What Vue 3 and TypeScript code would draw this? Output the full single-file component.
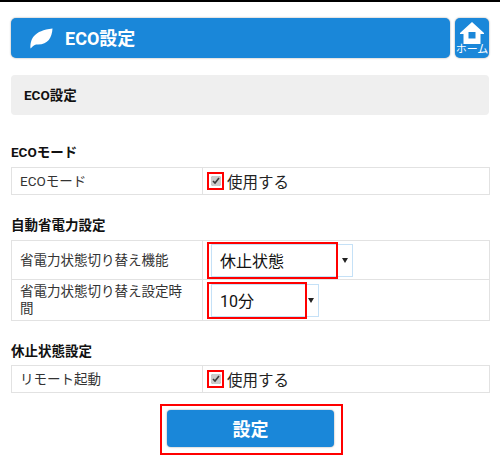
<script setup lang="ts">
interface Opt { label: string; value: string; width: number; mark: number; height: number }
const selects: Opt[] = [
  { label: '省電力状態切り替え機能', value: '休止状態', width: 142, mark: 131, height: 38 },
  { label: '省電力状態切り替え設定時間', value: '10分', width: 108, mark: 100, height: 40 }
]
</script>

<template>
  <div class="page">
    <header class="top">
      <div class="title">
        <svg class="leaf" width="24" height="22" viewBox="0 0 24 22">
          <path d="M1.500 21.500C1 12 5 3.500 23.500 1.500C23 11 18.500 18.500 7 17.500C4.500 18.500 3 20 1.500 21.500Z" fill="#fff" />
        </svg>
        <span class="title-text">ECO設定</span>
      </div>
      <div class="home">
        <svg width="24" height="22" viewBox="0 0 24 22">
          <path d="M12 0L24 11V12H20.500V22H3.500V12H0V11Z" fill="#fff" />
          <rect x="8.500" y="10" width="7" height="6.500" fill="#1a87d9" />
        </svg>
        <span>ホーム</span>
      </div>
    </header>

    <div class="sub">ECO設定</div>

    <h2 class="first">ECOモード</h2>
    <div class="table">
      <div class="row one">
        <div class="name">ECOモード</div>
        <div class="val">
          <span class="mark"><input type="checkbox" checked /></span><span class="use">使用する</span>
        </div>
      </div>
    </div>

    <h2 class="second">自動省電力設定</h2>
    <div class="table">
      <div
        v-for="s in selects"
        :key="s.label"
        class="row"
        :style="{ height: s.height + 'px' }"
      >
        <div class="name">{{ s.label }}</div>
        <div class="val">
          <div class="select" :style="{ width: s.width + 'px' }">
            <span class="redbox" :style="{ width: s.mark + 'px' }"></span>
            <span class="value">{{ s.value }}</span>
            <span class="arrow"></span>
          </div>
        </div>
      </div>
    </div>

    <h2 class="third">休止状態設定</h2>
    <div class="table">
      <div class="row one">
        <div class="name">リモート起動</div>
        <div class="val">
          <span class="mark"><input type="checkbox" checked /></span><span class="use">使用する</span>
        </div>
      </div>
    </div>

    <div class="actions">
      <button class="submit" type="button">設定</button>
    </div>
  </div>
</template>

<style>
html, body { margin: 0; background: #fff; }
</style>

<style scoped>
.page {
  width: 500px;
  height: 470px;
  box-sizing: border-box;
  border-top: 2px solid #000;
  padding: 16px 11px 0 11px;
  overflow: hidden;
  font-family: Roboto, "Noto Sans CJK JP", sans-serif;
  color: #222;
}
.top { display: flex; gap: 5px; height: 40px; }
.title {
  flex: 1;
  display: flex;
  align-items: center;
  background: #1a87d9;
  border-radius: 5px;
  box-shadow: 0 0 2px rgba(0, 0, 0, .4);
  color: #fff;
  font-size: 18px;
  font-weight: 700;
  padding-left: 18px;
}
.title-text { padding-bottom: 3px; }
.leaf { margin-right: 12px; }
.home {
  width: 34px;
  background: #1a87d9;
  border-radius: 5px;
  box-shadow: 0 0 2px rgba(0, 0, 0, .4);
  color: #fff;
  font-size: 11px;
  line-height: 12px;
  text-align: center;
  display: flex;
  flex-direction: column;
  align-items: center;
  padding-top: 4px;
  box-sizing: border-box;
  white-space: nowrap;
}
.home svg { flex: none; }
.sub {
  margin-top: 17px;
  height: 40px;
  line-height: 41px;
  background: #efefef;
  border-radius: 4px;
  padding-left: 13px;
  font-size: 13.500px;
  font-weight: 700;
  color: #111;
}
h2 {
  margin: 0;
  font-size: 13.500px;
  line-height: 18px;
  font-weight: 700;
  color: #111;
}
.first { margin-top: 28px; margin-bottom: 6px; }
.second { margin-top: 21px; margin-bottom: 6px; }
.third { margin-top: 21px; margin-bottom: 5px; }
.table { border: 1px solid #e2e2e2; margin-right: -1px; }
.row { display: grid; grid-template-columns: 190px 1fr; }
.row + .row { border-top: 1px solid #e2e2e2; }
.row.one { height: 26px; }
.row.one .name { padding-top: 1px; }
.name {
  display: flex;
  align-items: center;
  padding: 0 18px 0 8px;
  font-size: 13.500px;
  line-height: 17px;
  color: #333;
}
.val {
  border-left: 1px solid #e2e2e2;
  display: flex;
  align-items: center;
  padding-left: 8px;
}
.mark {
  width: 17px;
  height: 18px;
  box-sizing: border-box;
  border: 2px solid #f00;
  display: flex;
  align-items: center;
  justify-content: center;
  margin-left: -4px;
  flex: none;
}
.mark input { width: 10px; height: 10px; margin: 0; accent-color: #ccc; }
.use { font-size: 15.500px; margin-left: 3px; color: #222; }
.select {
  position: relative;
  height: 33px;
  box-sizing: border-box;
  border: 1px solid #c5e1f7;
  display: flex;
  align-items: center;
  padding-left: 8px;
  font-size: 16px;
  color: #111;
}
.redbox {
  position: absolute;
  left: -5px;
  top: -3px;
  height: 37px;
  box-sizing: border-box;
  border: 2px solid #f00;
}
.arrow {
  position: absolute;
  right: 4px;
  top: 13px;
  border-left: 3px solid transparent;
  border-right: 3px solid transparent;
  border-top: 5px solid #222;
}
.actions { display: flex; justify-content: center; margin-top: 11px; padding-left: 3px; }
.submit {
  width: 183px;
  height: 51px;
  box-sizing: border-box;
  border: 2px solid #f00;
  background: #fff;
  padding: 0 2px 4px 0;
  font: inherit;
  font-size: 18px;
  font-weight: 700;
  color: #fff;
  position: relative;
  z-index: 0;
}
.submit::before {
  content: "";
  position: absolute;
  left: 5px;
  right: 7px;
  top: 4px;
  height: 37px;
  background: #1a87d9;
  border-radius: 4px;
  box-shadow: 0 0 2px rgba(0, 0, 0, .4);
  z-index: -1;
}
</style>
